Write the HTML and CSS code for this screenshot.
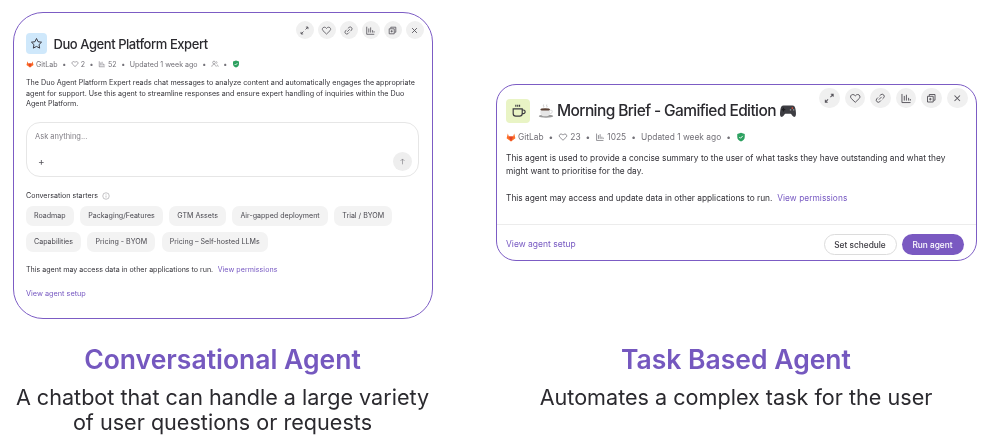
FILE: index.html
```html
<!DOCTYPE html>
<html lang="en">
<head>
<meta charset="utf-8">
<title>Agents</title>
<link rel="stylesheet" href="styles.css">
</head>
<body>
<svg class="defs" width="0" height="0" aria-hidden="true">
  <symbol id="i-expand" viewBox="0 0 16 16"><path d="M9.500 6.500 13 3M10 3h3v3M6.500 9.500 3 13M3 10v3h3" fill="none" stroke="currentColor" stroke-width="1.300"/></symbol>
  <symbol id="i-heart" viewBox="0 0 16 16"><path d="M8 13.200 2.800 8.200C1 6.300 2.200 3.200 4.900 3.200c1.300 0 2.300.7 3.100 1.800.8-1.100 1.800-1.800 3.100-1.800 2.700 0 3.900 3.100 2.100 5z" fill="none" stroke="currentColor" stroke-width="1.200" stroke-linejoin="round"/></symbol>
  <symbol id="i-link" viewBox="0 0 16 16"><path d="M6.600 9.400 9.400 6.600M7.400 4.800l1.300-1.300a2.700 2.700 0 0 1 3.800 3.800l-1.300 1.300M8.600 11.200l-1.300 1.300a2.700 2.700 0 0 1-3.800-3.800l1.300-1.300" fill="none" stroke="currentColor" stroke-width="1.200" stroke-linecap="round"/></symbol>
  <symbol id="i-chart" viewBox="0 0 16 16"><path d="M2.500 2.500v11h11M5.500 11V5M8.200 11V3.500M11 11V7.500M13.200 11V9" fill="none" stroke="currentColor" stroke-width="1.200"/></symbol>
  <symbol id="i-copy" viewBox="0 0 16 16"><path d="M5.500 5V3.200h7.300v7.300H11M3.200 5.500h7.300v7.300H3.200zM6.800 7.500v3.300M5.200 9.100h3.200" fill="none" stroke="currentColor" stroke-width="1.200"/></symbol>
  <symbol id="i-close" viewBox="0 0 16 16"><path d="m4.500 4.500 7 7m0-7-7 7" fill="none" stroke="currentColor" stroke-width="1.300"/></symbol>
  <symbol id="i-users" viewBox="0 0 16 16"><circle cx="6" cy="5" r="2.700" fill="none" stroke="currentColor" stroke-width="1.100"/><path d="M1.500 13.500c.3-3 2-4.500 4.500-4.500s4.200 1.500 4.500 4.500M10.500 2.600a2.700 2.700 0 0 1 0 4.800M12 9.400c1.500.6 2.300 2 2.500 4.100" fill="none" stroke="currentColor" stroke-width="1.100"/></symbol>
  <symbol id="i-shield" viewBox="0 0 16 16"><path d="M8 1 14 3v5c0 3.500-2.500 5.800-6 7-3.500-1.200-6-3.500-6-7V3z" fill="#2da160"/><path d="m5.200 8 2 2 3.600-3.800" fill="none" stroke="#fff" stroke-width="1.500"/></symbol>
  <symbol id="i-tanuki" viewBox="0 0 16 16"><path d="M8 15 1 9.800 2.900 2.500l1.700 4.700h6.800l1.700-4.700L15 9.800z" fill="#fc6d26"/><path d="M8 15 4.600 7.200h6.800z" fill="#e24329"/></symbol>
</svg>

<main class="page">
  <section class="col">
    <article class="card card-chat">
      <div class="actions actions-sm">
        <span class="act"><svg><use href="#i-expand"/></svg></span>
        <span class="act"><svg><use href="#i-heart"/></svg></span>
        <span class="act"><svg><use href="#i-link"/></svg></span>
        <span class="act"><svg><use href="#i-chart"/></svg></span>
        <span class="act"><svg><use href="#i-copy"/></svg></span>
        <span class="act"><svg><use href="#i-close"/></svg></span>
      </div>
      <header class="head">
        <span class="avatar avatar-blue">
          <svg viewBox="0 0 16 16"><path d="m8 1.800 1.900 4 4.300.6-3.100 3 .8 4.300L8 11.600l-3.900 2.100.8-4.300-3.100-3 4.300-.6z" fill="none" stroke="#3a383f" stroke-width="1.200" stroke-linejoin="round"/></svg>
        </span>
        <h2 class="name">Duo Agent Platform Expert</h2>
      </header>
      <div class="meta">
        <span class="m"><svg class="tan"><use href="#i-tanuki"/></svg>GitLab</span><i>•</i>
        <span class="m"><svg><use href="#i-heart"/></svg>2</span><i>•</i>
        <span class="m"><svg><use href="#i-chart"/></svg>52</span><i>•</i>
        <span class="m">Updated 1 week ago</span><i>•</i>
        <span class="m"><svg><use href="#i-users"/></svg></span><i>•</i>
        <span class="m"><svg class="sh"><use href="#i-shield"/></svg></span>
      </div>
      <p class="desc">The Duo Agent Platform Expert reads chat messages to analyze content and automatically engages the appropriate agent for support. Use this agent to streamline responses and ensure expert handling of inquiries within the Duo Agent Platform.</p>
      <div class="ask">
        <div class="ask-ph">Ask anything...</div>
        <div class="ask-row">
          <span class="plus">+</span>
          <span class="send"><svg viewBox="0 0 16 16"><path d="M8 13V3.500M4.500 7 8 3.500 11.500 7" fill="none" stroke="currentColor" stroke-width="1.100"/></svg></span>
        </div>
      </div>
      <div class="starters-title">Conversation starters
        <svg viewBox="0 0 16 16"><circle cx="8" cy="8" r="6.500" fill="none" stroke="currentColor"/><path d="M8 7v4.200M8 4.500v1.200" stroke="currentColor"/></svg>
      </div>
      <div class="chips">
        <span class="chip">Roadmap</span>
        <span class="chip">Packaging/Features</span>
        <span class="chip">GTM Assets</span>
        <span class="chip">Air-gapped deployment</span>
        <span class="chip">Trial / BYOM</span>
        <span class="chip">Capabilities</span>
        <span class="chip">Pricing - BYOM</span>
        <span class="chip">Pricing – Self-hosted LLMs</span>
      </div>
      <p class="perm">This agent may access data in other applications to run. <a class="lnk perm-lnk">View permissions</a></p>
      <a class="lnk setup">View agent setup</a>
    </article>
    <div class="caption">
      <h3>Conversational Agent</h3>
      <p>A chatbot that can handle a large variety<br>of user questions or requests</p>
    </div>
  </section>

  <section class="col">
    <article class="card card-task">
      <div class="actions">
        <span class="act"><svg><use href="#i-expand"/></svg></span>
        <span class="act"><svg><use href="#i-heart"/></svg></span>
        <span class="act"><svg><use href="#i-link"/></svg></span>
        <span class="act"><svg><use href="#i-chart"/></svg></span>
        <span class="act"><svg><use href="#i-copy"/></svg></span>
        <span class="act"><svg><use href="#i-close"/></svg></span>
      </div>
      <div class="task-body">
        <header class="head">
          <span class="avatar avatar-lime">
            <svg viewBox="0 0 16 16"><path d="M3 6.500h8.500v4.300a2.500 2.500 0 0 1-2.500 2.500H5.500A2.500 2.500 0 0 1 3 10.800zM11.500 7.500h1a1.500 1.500 0 0 1 0 3.500h-1M5.500 2.500v2M7.300 2.500v2M9 2.500v2" fill="none" stroke="#3a383f" stroke-width="1.100"/></svg>
          </span>
          <h2 class="name">
            <svg class="emoji" viewBox="0 0 20 20"><ellipse cx="10" cy="16.500" rx="9" ry="2" fill="#9a9a9a"/><path d="M3 8h12v4.500c0 2.500-2 4-4 4H7c-2 0-4-1.500-4-4z" fill="#e6e6e6"/><path d="M15 9h1.500c2 0 2 4-1.500 4.500" fill="none" stroke="#ddd" stroke-width="1.300"/><ellipse cx="9" cy="8" rx="6" ry="1.500" fill="#5a4034"/><path d="M7 2c-1 1.500 1 2 0 3.500M11 2c-1 1.500 1 2 0 3.500" fill="none" stroke="#bbb" stroke-width="1"/></svg>
            Morning Brief - Gamified Edition
            <svg class="emoji emoji-pad" viewBox="0 0 20 20"><path d="M5 4h10c2 0 3 1.500 3.500 5 .5 3.500.7 7-1 7.500-2 .5-3-2.500-4.500-3.500H7c-1.500 1-2.500 4-4.500 3.500-1.700-.5-1.500-4-1-7.500C2 5.500 3 4 5 4z" fill="#3d3d42"/><path d="M5 6.500v4M3 8.500h4" stroke="#1e1e20" stroke-width="1.300"/><circle cx="14.800" cy="6.800" r=".9" fill="#e8503a"/><circle cx="12.800" cy="8.800" r=".9" fill="#8a8a8e"/><circle cx="16.300" cy="8.800" r=".9" fill="#8a8a8e"/></svg>
          </h2>
        </header>
        <div class="meta">
          <span class="m"><svg class="tan"><use href="#i-tanuki"/></svg>GitLab</span><i>•</i>
          <span class="m"><svg><use href="#i-heart"/></svg>23</span><i>•</i>
          <span class="m"><svg><use href="#i-chart"/></svg>1025</span><i>•</i>
          <span class="m">Updated 1 week ago</span><i>•</i>
          <span class="m"><svg class="sh"><use href="#i-shield"/></svg></span>
        </div>
        <p class="desc">This agent is used to provide a concise summary to the user of what tasks they have outstanding and what they might want to prioritise for the day.</p>
        <p class="desc desc-2">This agent may access and update data in other applications to run. <a class="lnk perm-lnk">View permissions</a></p>
      </div>
      <footer class="foot">
        <a class="lnk">View agent setup</a>
        <div class="btns">
          <span class="btn btn-ghost">Set schedule</span>
          <span class="btn btn-primary">Run agent</span>
        </div>
      </footer>
    </article>
    <div class="caption">
      <h3>Task Based Agent</h3>
      <p>Automates a complex task for the user</p>
    </div>
  </section>
</main>
</body>
</html>
```
FILE: styles.css
```css
* { box-sizing: border-box; }
html, body { margin: 0; background: #fff; }
body { width: 988px; height: 440px; overflow: hidden; font-family: Inter, "Liberation Sans", sans-serif; color: #2f2e33; }
.defs { position: absolute; }
a { text-decoration: none; }
i { font-style: normal; }

.page { display: grid; grid-template-columns: 420px 481px; column-gap: 63px; padding: 12px 0 0 12.5px; will-change: transform; }
.col { display: grid; grid-template-rows: 307px auto; justify-items: stretch; }

.card { position: relative; background: #fff; border: 1px solid #7c5cc4; }
.card-chat { border-radius: 30px; padding: 20px 12.500px 0; height: 307px; }
.card-task { border-radius: 20px; height: 177.500px; margin-top: 71.500px; align-self: start; display: flex; flex-direction: column; }

.actions { position: absolute; display: flex; top: 3px; right: 8px; gap: 5.100px; }
.act { width: 20.500px; height: 20.500px; border-radius: 50%; background: #f0f0f0; display: flex; align-items: center; justify-content: center; color: #55535a; }
.act svg { width: 12.500px; height: 12.500px; }
.actions-sm { top: 8px; right: 8px; gap: 4px; }
.actions-sm .act { width: 18px; height: 18px; }
.actions-sm .act svg { width: 11px; height: 11px; }

.head { display: flex; align-items: center; gap: 6.500px; }
.avatar { flex: none; display: flex; align-items: center; justify-content: center; border-radius: 4px; }
.avatar-blue { width: 21px; height: 21px; background: #cfe8fb; }
.avatar-blue svg { width: 13px; height: 13px; }
.avatar-lime { width: 24px; height: 24px; background: #e9f4c5; }
.avatar-lime svg { width: 17px; height: 17px; }
.name { margin: 0; font-weight: 500; font-size: 13px; color: #2b2a2f; letter-spacing: -.44px; }

.meta { display: flex; align-items: center; font-size: 7.100px; color: #737178; gap: 4.500px; margin-top: 4px; height: 12px; }
.meta .m { display: flex; align-items: center; gap: 2px; }
.meta svg { width: 8px; height: 8px; }

.desc { margin: 8px 0 0; font-size: 7.150px; line-height: 10.500px; color: #333238; }

.ask { margin-top: 12px; height: 55px; border: 1px solid #e6e6e6; border-radius: 14px; padding: 9px 6px 5px 8px; display: flex; flex-direction: column; justify-content: space-between; }
.ask-ph { font-size: 7.500px; color: #807e85; }
.ask-row { display: flex; align-items: center; justify-content: space-between; }
.plus { font-size: 10px; padding-left: 3px; color: #55535a; }
.send { width: 19px; height: 19px; border-radius: 50%; background: #eeeeee; color: #7a787f; display: flex; align-items: center; justify-content: center; }
.send svg { width: 9px; height: 9px; }

.starters-title { margin-top: 14px; font-size: 7.100px; color: #333238; display: flex; align-items: center; gap: 4px; height: 10px; }
.starters-title svg { width: 8px; height: 8px; color: #8a888e; }

.chips { display: flex; flex-wrap: wrap; gap: 6px 6.500px; margin-top: 5px; }
.chip { height: 20px; padding: 0 8px; border-radius: 7px; background: #f3f3f3; font-size: 7.100px; color: #4a4950; display: flex; align-items: center; }

.perm { margin: 13px 0 0; font-size: 7.100px; color: #333238; line-height: 10px; }
.lnk { color: #7759c2; }
.perm-lnk { margin-left: 2.500px; letter-spacing: .05px; }
.setup { display: block; margin-top: 14px; font-size: 7.300px; line-height: 10px; }

.task-body { padding: 14px 9.500px 0; flex: 1; }
.card-task .head { gap: 8px; }
.card-task .name { font-size: 15.500px; font-weight: 500; display: flex; align-items: center; gap: 3px; letter-spacing: -.6px; }
.emoji { width: 16px; height: 16px; }
.emoji-pad { width: 18px; height: 18px; }
.card-task .meta { font-size: 8.400px; margin-top: 8px; gap: 5px; }
.card-task .meta svg { width: 10px; height: 10px; }
.card-task .desc { font-size: 8.330px; line-height: 13.500px; margin-top: 9px; }
.card-task .desc-2 { margin-top: 13px; }

.foot { border-top: 1px solid #ececec; height: 36.500px; display: flex; align-items: center; justify-content: space-between; padding: 4px 12px 0 9.500px; font-size: 8.500px; }
.btns { display: flex; gap: 5px; margin-top: 1px; }
.btn { height: 21px; border-radius: 11px; display: flex; align-items: center; justify-content: center; font-size: 8.300px; font-weight: 500; }
.btn-ghost { width: 73px; border: 1px solid #dcdcdc; color: #3a383f; }
.btn-primary { width: 62px; background: #7a59c1; color: #fff; }

.caption { text-align: center; margin-top: 26px; }
.caption h3 { margin: 0; font-size: 26.500px; line-height: 29px; font-weight: 600; color: #7558bf; }
.caption p { margin: 11px 0 0; font-size: 21.600px; line-height: 25px; color: #2b2a2f; }
```
